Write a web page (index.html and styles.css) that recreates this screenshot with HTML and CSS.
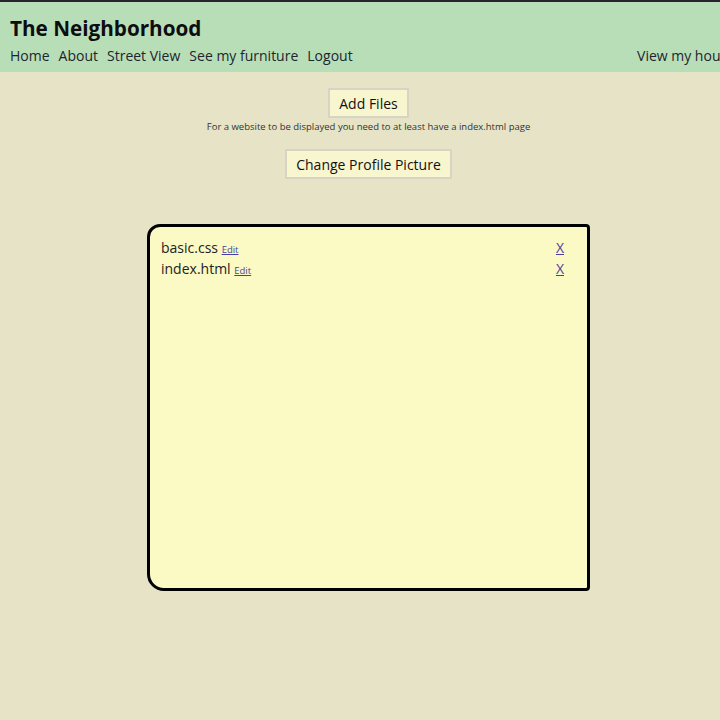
FILE: index.html
```html
<!DOCTYPE html>
<html>
<head>
<meta charset="utf-8">
<link rel="stylesheet" href="styles.css">
</head>
<body>
<header class="header">
  <h1 class="title">The Neighborhood</h1>
  <nav class="nav">
    <div class="nav-left">
      <a class="nav-link">Home</a>
      <a class="nav-link">About</a>
      <a class="nav-link">Street View</a>
      <a class="nav-link">See my furniture</a>
      <a class="nav-link">Logout</a>
    </div>
    <a class="nav-link">View my house</a>
  </nav>
</header>
<main class="main">
  <button class="btn">Add Files</button>
  <p class="hint">For a website to be displayed you need to at least have a index.html page</p>
  <button class="btn btn-profile">Change Profile Picture</button>
  <section class="files">
    <div class="file-row">
      <span class="file-name">basic.css <a class="edit">Edit</a></span>
      <a class="del">X</a>
    </div>
    <div class="file-row">
      <span class="file-name">index.html <a class="edit">Edit</a></span>
      <a class="del">X</a>
    </div>
  </section>
</main>
</body>
</html>
```
FILE: styles.css
```css
html, body {
  margin: 0;
  padding: 0;
  width: 720px;
  height: 720px;
  overflow: hidden;
}
body {
  background: #e6e3c6;
  font-family: "Open Sans", "Noto Sans", sans-serif;
  color: #111;
}
.header {
  background: #b8deb7;
  border-top: 2px solid #2a2230;
  height: 70px;
  padding: 0 10px;
}
.title {
  margin: 0;
  padding-top: 13px;
  font-size: 20.7px;
  line-height: 27px;
  font-weight: 700;
  color: #0d0d10;
}
.nav {
  display: flex;
  justify-content: space-between;
  margin-top: 3px;
  width: 725px;
}
.nav-left {
  display: flex;
  gap: 9px;
}
.nav-link {
  font-size: 14px;
  line-height: 22px;
  color: #1c2530;
  text-decoration: none;
  white-space: nowrap;
}
.main {
  width: 737px;
  display: flex;
  flex-direction: column;
  align-items: center;
  padding-top: 16px;
}
.btn {
  font-family: "Open Sans", "Noto Sans", sans-serif;
  font-size: 14px;
  background: #f8f6cf;
  border: 2px solid #d6d4c4;
  height: 30px;
  padding: 0 9px;
  color: #111;
}
.hint {
  font-size: 9.5px;
  margin: 3px 0 0 0;
  line-height: 12px;
  color: #333;
}
.btn-profile {
  margin-top: 16px;
}
.files {
  margin-top: 45px;
  background: #fbf9c4;
  border: 3px solid #000;
  border-radius: 13px 4px 4px 17px;
  padding: 11px 23px 0 11px;
  box-sizing: border-box;
  width: 443px;
  height: 367px;
}
.file-row {
  display: flex;
  justify-content: space-between;
  align-items: baseline;
  height: 21px;
}
.file-name {
  font-size: 14px;
  color: #222;
}
.edit {
  font-size: 9.5px;
  color: #4a3fa0;
  text-decoration: underline;
}
.del {
  font-size: 14px;
  color: #4a3fa0;
  text-decoration: underline;
}
```
